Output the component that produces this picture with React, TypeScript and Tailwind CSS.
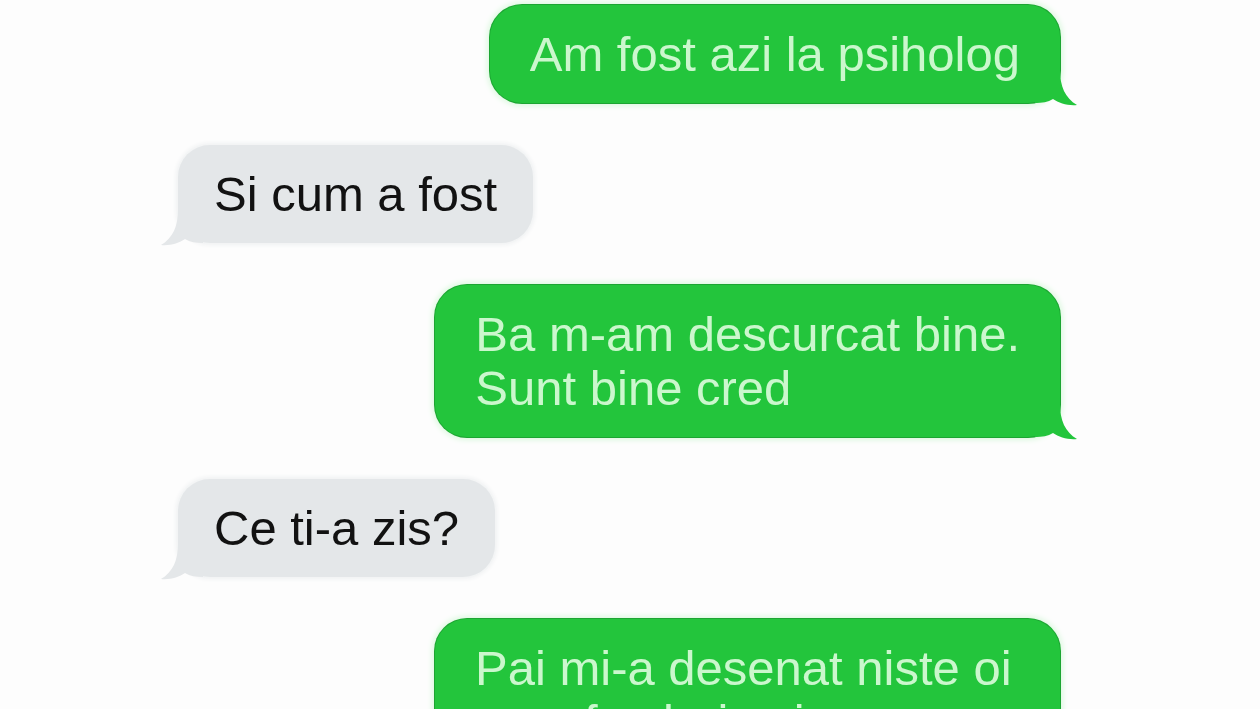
import React from 'react';

const font = { fontFamily: '"Liberation Sans", Arial, sans-serif' };

const Tail: React.FC<{ side: 'left' | 'right'; color: string }> = ({ side, color }) => (
  <svg
    viewBox="0 0 42 36"
    className={
      side === 'right'
        ? 'absolute right-[-17px] bottom-[-3px] w-[42px] h-[36px]'
        : 'absolute left-[-17px] bottom-[-3px] w-[42px] h-[36px] -scale-x-100'
    }
  >
    <path d="M0 0 H25 C25 16 30 28 42 35 C33 36 24 33 18 29 C13 32 7 33 0 33 Z" fill={color} />
  </svg>
);

const Sent: React.FC<{ children: React.ReactNode; className?: string }> = ({ children, className = '' }) => (
  <div
    className={`relative self-end rounded-[32px] bg-[#23c53c] px-[40px] py-[22px] text-[49px] leading-[54px] text-[#cbf7cd] shadow-[0_0_0_1px_#1ca532,0_0_6px_2px_#d2f7d6] ${className}`}
  >
    <Tail side="right" color="#23c53c" />
    <span className="relative">{children}</span>
  </div>
);

const Received: React.FC<{ children: React.ReactNode }> = ({ children }) => (
  <div className="relative self-start rounded-[32px] bg-[#e4e7e9] px-[36px] py-[22px] text-[49px] leading-[54px] text-[#121212] shadow-[0_0_4px_2px_#eff1f2]">
    <Tail side="left" color="#e4e7e9" />
    <span className="relative">{children}</span>
  </div>
);

export default function App() {
  return (
    <div className="h-[709px] w-[1260px] overflow-hidden bg-[#fdfdfd]" style={font}>
      <div className="ml-[178px] flex w-[882px] flex-col gap-[42px] pt-[5px]">
        <Sent>Am fost azi la psiholog</Sent>
        <Received>Si cum a fost</Received>
        <Sent>
          Ba m-am descurcat bine.
          <br />
          Sunt bine cred
        </Sent>
        <Received>Ce ti-a zis?</Received>
        <Sent className="w-[625px]">
          Pai mi-a desenat niste oi
          <br />
          care fac baie si m-a intrebat
        </Sent>
      </div>
    </div>
  );
}
